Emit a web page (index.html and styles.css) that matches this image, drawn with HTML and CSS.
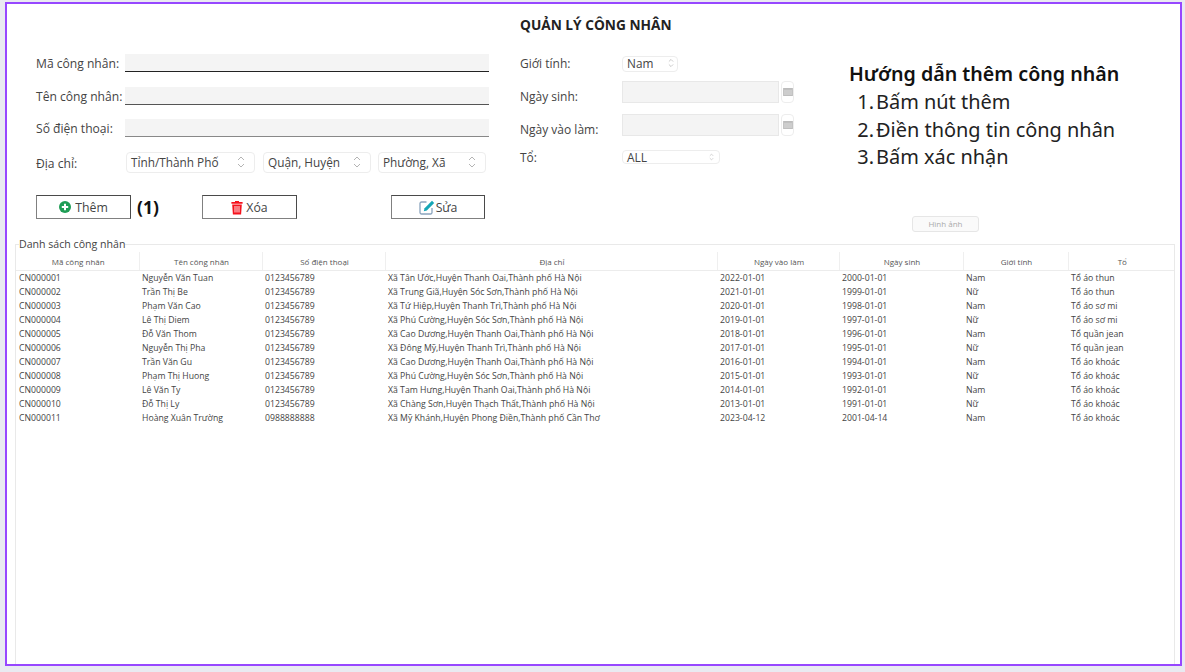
FILE: index.html
```html
<!DOCTYPE html>
<html lang="vi">
<head>
<meta charset="utf-8">
<title>Quản lý công nhân</title>
<link rel="stylesheet" href="styles.css">
</head>
<body>
<svg class="defs" width="0" height="0" aria-hidden="true">
  <symbol id="updown" viewBox="0 0 8 14"><path d="M1 5l3-3 3 3M1 9l3 3 3-3" fill="none" stroke="#b4b4b4" stroke-width="1"/></symbol>
  <symbol id="cal" viewBox="0 0 11 9"><rect width="11" height="9" fill="#bcbcbc"/><rect x="1" y="2" width="9" height="6" fill="#cdcdcd"/></symbol>
</svg>
<main class="frame">
  <h1 class="title">QUẢN LÝ CÔNG NHÂN</h1>
  <section class="top">
    <div class="col-left">
      <div class="row row-1"><label class="label">Mã công nhân:</label><div class="input line-dark"></div></div>
      <div class="row row-2"><label class="label">Tên công nhân:</label><div class="input line-mid"></div></div>
      <div class="row row-3"><label class="label">Số điện thoại:</label><div class="input line-light"></div></div>
      <div class="row row-addr">
        <label class="label label-addr">Địa chỉ:</label>
        <div class="select sel-city"><span>Tỉnh/Thành Phố</span><svg class="updown"><use href="#updown"/></svg></div>
        <div class="select sel-dist"><span>Quận, Huyện</span><svg class="updown"><use href="#updown"/></svg></div>
        <div class="select sel-ward"><span>Phường, Xã</span><svg class="updown"><use href="#updown"/></svg></div>
      </div>
      <div class="actions">
        <button class="btn" type="button">
          <svg class="ico" viewBox="0 0 12 12"><circle cx="6" cy="6" r="6" fill="#1f9d55"/><path d="M6 2.800v6.400M2.800 6h6.400" stroke="#fff" stroke-width="2"/></svg>Thêm
        </button>
        <span class="step">(1)</span>
        <button class="btn btn-del" type="button">
          <svg class="ico ico-del" viewBox="0 0 12 14"><path d="M4 1.600V.6h4v1h3.600v1.600H.4V1.600zM1.200 4h9.600l-.7 10H1.900z" fill="#f5121d"/><path d="M4 5.500v6.500M6 5.500v6.500M8 5.500v6.500" stroke="#fff" stroke-width=".9"/></svg>Xóa
        </button>
        <button class="btn btn-edit" type="button">
          <svg class="ico ico-edit" viewBox="0 0 16 15"><path d="M7.500 2H2.500A1.500 1.500 0 0 0 1 3.500v9A1.500 1.500 0 0 0 2.500 14h9a1.500 1.500 0 0 0 1.500-1.500V8" fill="none" stroke="#8aa4bd" stroke-width="1.300"/><path d="M13 .8l2.200 2.200-7.400 7.400-3 .8.800-3z" fill="#16a6b6"/></svg>Sửa
        </button>
      </div>
    </div>
    <div class="col-mid">
      <div class="mrow mrow-sex"><label class="mlabel">Giới tính:</label><div class="select sel-sex"><span>Nam</span><svg class="updown updown-sm"><use href="#updown"/></svg></div></div>
      <div class="mrow mrow-date"><label class="mlabel mlabel-low">Ngày sinh:</label><div class="date"></div><div class="cal"><svg class="cal-ico"><use href="#cal"/></svg></div></div>
      <div class="mrow mrow-date2"><label class="mlabel mlabel-low">Ngày vào làm:</label><div class="date"></div><div class="cal"><svg class="cal-ico"><use href="#cal"/></svg></div></div>
      <div class="mrow mrow-team"><label class="mlabel">Tổ:</label><div class="select sel-team"><span>ALL</span><svg class="updown updown-xs"><use href="#updown"/></svg></div></div>
    </div>
    <div class="col-help">
      <h2 class="help-title">Hướng dẫn thêm công nhân</h2>
      <ol class="help-list">
        <li>Bấm nút thêm</li>
        <li>Điền thông tin công nhân</li>
        <li>Bấm xác nhận</li>
      </ol>
      <button class="btn-image" type="button">Hình ảnh</button>
    </div>
  </section>
  <fieldset class="group">
    <legend class="legend">Danh sách công nhân</legend>
    <table class="grid">
      <colgroup>
        <col class="c1"><col class="c2"><col class="c3"><col class="c4"><col class="c5"><col class="c6"><col class="c7"><col class="c8">
      </colgroup>
      <thead>
        <tr><th>Mã công nhân</th><th>Tên công nhân</th><th>Số điện thoại</th><th>Địa chỉ</th><th>Ngày vào làm</th><th>Ngày sinh</th><th>Giới tính</th><th>Tổ</th></tr>
      </thead>
      <tbody>
        <tr><td>CN000001</td><td>Nguyễn Văn Tuan</td><td>0123456789</td><td>Xã Tân Ước,Huyện Thanh Oai,Thành phố Hà Nội</td><td>2022-01-01</td><td>2000-01-01</td><td>Nam</td><td>Tổ áo thun</td></tr>
        <tr><td>CN000002</td><td>Trần Thị Be</td><td>0123456789</td><td>Xã Trung Giã,Huyện Sóc Sơn,Thành phố Hà Nội</td><td>2021-01-01</td><td>1999-01-01</td><td>Nữ</td><td>Tổ áo thun</td></tr>
        <tr><td>CN000003</td><td>Phạm Văn Cao</td><td>0123456789</td><td>Xã Tứ Hiệp,Huyện Thanh Trì,Thành phố Hà Nội</td><td>2020-01-01</td><td>1998-01-01</td><td>Nam</td><td>Tổ áo sơ mi</td></tr>
        <tr><td>CN000004</td><td>Lê Thị Diem</td><td>0123456789</td><td>Xã Phú Cường,Huyện Sóc Sơn,Thành phố Hà Nội</td><td>2019-01-01</td><td>1997-01-01</td><td>Nữ</td><td>Tổ áo sơ mi</td></tr>
        <tr><td>CN000005</td><td>Đỗ Văn Thom</td><td>0123456789</td><td>Xã Cao Dương,Huyện Thanh Oai,Thành phố Hà Nội</td><td>2018-01-01</td><td>1996-01-01</td><td>Nam</td><td>Tổ quần jean</td></tr>
        <tr><td>CN000006</td><td>Nguyễn Thị Pha</td><td>0123456789</td><td>Xã Đông Mỹ,Huyện Thanh Trì,Thành phố Hà Nội</td><td>2017-01-01</td><td>1995-01-01</td><td>Nữ</td><td>Tổ quần jean</td></tr>
        <tr><td>CN000007</td><td>Trần Văn Gu</td><td>0123456789</td><td>Xã Cao Dương,Huyện Thanh Oai,Thành phố Hà Nội</td><td>2016-01-01</td><td>1994-01-01</td><td>Nam</td><td>Tổ áo khoác</td></tr>
        <tr><td>CN000008</td><td>Phạm Thị Huong</td><td>0123456789</td><td>Xã Phú Cường,Huyện Sóc Sơn,Thành phố Hà Nội</td><td>2015-01-01</td><td>1993-01-01</td><td>Nữ</td><td>Tổ áo khoác</td></tr>
        <tr><td>CN000009</td><td>Lê Văn Ty</td><td>0123456789</td><td>Xã Tam Hưng,Huyện Thanh Oai,Thành phố Hà Nội</td><td>2014-01-01</td><td>1992-01-01</td><td>Nam</td><td>Tổ áo khoác</td></tr>
        <tr><td>CN000010</td><td>Đỗ Thị Ly</td><td>0123456789</td><td>Xã Chàng Sơn,Huyện Thạch Thất,Thành phố Hà Nội</td><td>2013-01-01</td><td>1991-01-01</td><td>Nữ</td><td>Tổ áo khoác</td></tr>
        <tr><td>CN000011</td><td>Hoàng Xuân Trường</td><td>0988888888</td><td>Xã Mỹ Khánh,Huyện Phong Điền,Thành phố Cần Thơ</td><td>2023-04-12</td><td>2001-04-14</td><td>Nam</td><td>Tổ áo khoác</td></tr>
      </tbody>
    </table>
  </fieldset>
</main>
</body>
</html>
```

FILE: styles.css
```css
* { box-sizing: border-box; }
html, body { height: 100%; }
body {
  margin: 0;
  background: #e9eaf1;
  font-family: "Open Sans", "Noto Sans", sans-serif;
  color: #333;
  overflow: hidden;
}
.defs { position: absolute; }
.frame {
  margin: 2px 3px 0 5px;
  height: 664px;
  border: 2px solid #9747ff;
  background: #fff;
  display: flex;
  flex-direction: column;
}
.title {
  margin: 0;
  height: 50px;
  padding: 12px 0 0 513px;
  font-size: 13.700px;
  line-height: 18px;
  font-weight: 700;
  color: #222;
}
.top { display: flex; height: 182px; }
.col-left { margin-left: 29px; width: 453px; flex: none; }
.row { display: flex; align-items: center; }
.row-1 { height: 18px; }
.row-2 { height: 18px; margin-top: 15px; }
.row-3 { height: 18px; margin-top: 14px; }
.row-addr { height: 21px; margin-top: 15px; }
.label { width: 89px; flex: none; font-size: 12.100px; color: #444; white-space: nowrap; }
.label-addr { width: 90px; padding-top: 2px; }
.input { flex: 1; height: 18px; background: #f4f4f4; border-bottom: 1px solid #222; }
.line-mid { border-bottom-color: #555; }
.line-light { border-bottom: 1px solid #888; }
.select {
  height: 21px;
  border: 1px solid #ededed;
  border-radius: 4px;
  background: #fff;
  display: flex;
  align-items: center;
  justify-content: space-between;
  padding: 0 9px 2px 4px;
  font-size: 11.800px;
  color: #444;
  white-space: nowrap;
}
.sel-city { width: 129px; }
.sel-dist { width: 108px; margin-left: 8px; }
.sel-ward { width: 108px; margin-left: 7px; }
.updown { width: 8px; height: 14px; flex: none; }
.updown-sm { width: 6px; height: 10px; }
.updown-xs { width: 5px; height: 8px; }
.actions { display: flex; align-items: center; margin-top: 22px; height: 24px; }
.btn {
  width: 95px;
  height: 24px;
  padding: 0;
  border: 1px solid #4a4a4a;
  border-bottom-color: #808080;
  border-left-color: #808080;
  background: #fff;
  display: flex;
  align-items: center;
  justify-content: center;
  font-family: inherit;
  font-size: 12.300px;
  color: #444;
}
.ico { width: 12px; height: 12px; margin-right: 4px; flex: none; }
.ico-del { height: 15px; margin-right: 3px; }
.ico-edit { width: 16px; height: 15px; margin-right: 1px; }
.step { margin-left: 6px; width: 37px; font-size: 17.500px; font-weight: 700; color: #111; }
.btn-del { margin-left: 28px; }
.btn-edit { margin-left: 94px; width: 94px; }
.col-mid { margin-left: 31px; width: 274px; flex: none; }
.mrow { display: flex; align-items: center; }
.mlabel { width: 102px; flex: none; font-size: 12px; color: #444; white-space: nowrap; }
.mlabel-low { padding-top: 10px; }
.mrow-sex { height: 17px; margin-top: 1px; }
.mrow-date { height: 23px; margin-top: 8px; }
.mrow-date2 { height: 23px; margin-top: 10px; }
.mrow-team { height: 14px; margin-top: 14px; }
.sel-sex { width: 56px; height: 16px; padding: 0 3px 1px 4px; border-radius: 4px; }
.sel-team { width: 98px; height: 14px; padding: 0 5px 0 4px; font-size: 12px; }
.date { width: 157px; height: 22px; background: #f4f4f4; border: 1px solid #e8e8e8; }
.cal {
  width: 13px;
  height: 22px;
  margin-left: 2px;
  border: 1px solid #ededed;
  border-radius: 4px;
  display: flex;
  align-items: center;
  justify-content: center;
}
.cal-ico { width: 10px; height: 8px; }
.col-help { margin-left: 55px; flex: 1; display: flex; flex-direction: column; }
.help-title {
  margin: 7px 0 0;
  font-family: "Noto Sans", sans-serif;
  font-size: 19.650px;
  line-height: 26px;
  font-weight: 600;
  color: #111;
}
.help-list {
  margin: 1px 0 0;
  padding: 0;
  list-style: none;
  counter-reset: step;
  font-family: "Noto Sans", sans-serif;
  font-size: 19.950px;
  line-height: 27.500px;
  color: #222;
}
.help-list li { display: flex; counter-increment: step; }
.help-list li::before {
  content: counter(step) ".";
  width: 25px;
  flex: none;
  padding-right: 2px;
  text-align: right;
}
.btn-image {
  margin: 45px 0 0 63px;
  width: 67px;
  height: 16px;
  padding: 0;
  border: 1px solid #e6e6e6;
  border-radius: 3px;
  background: #fafafa;
  font-family: inherit;
  font-size: 8px;
  color: #aaa;
}
.group {
  flex: 1;
  min-height: 0;
  margin: 0 5px 0 8px;
  padding: 0;
  border: 1px solid #e9e9e9;
  border-bottom: 0;
  min-width: 0;
}
.legend {
  margin-left: 3px;
  padding: 0;
  font-size: 10.600px;
  line-height: 16px;
  color: #444;
}
.grid { width: 100%; border-collapse: collapse; table-layout: fixed; }
.c1 { width: 123px; }
.c2, .c3 { width: 123px; }
.c4 { width: 332px; }
.c5 { width: 122px; }
.c6 { width: 124px; }
.c7 { width: 105px; }
.grid th {
  height: 18px;
  padding: 2px 1px 0 3px;
  font-size: 8px;
  font-weight: 400;
  color: #555;
  border-bottom: 1px solid #ececec;
  border-left: 1px solid #efefef;
}
.grid th:first-child { border-left: 0; }
.grid td {
  height: 14px;
  padding: 0 2px 0 3px;
  font-size: 8.700px;
  line-height: 14px;
  color: #444;
  white-space: nowrap;
  overflow: hidden;
}
```
